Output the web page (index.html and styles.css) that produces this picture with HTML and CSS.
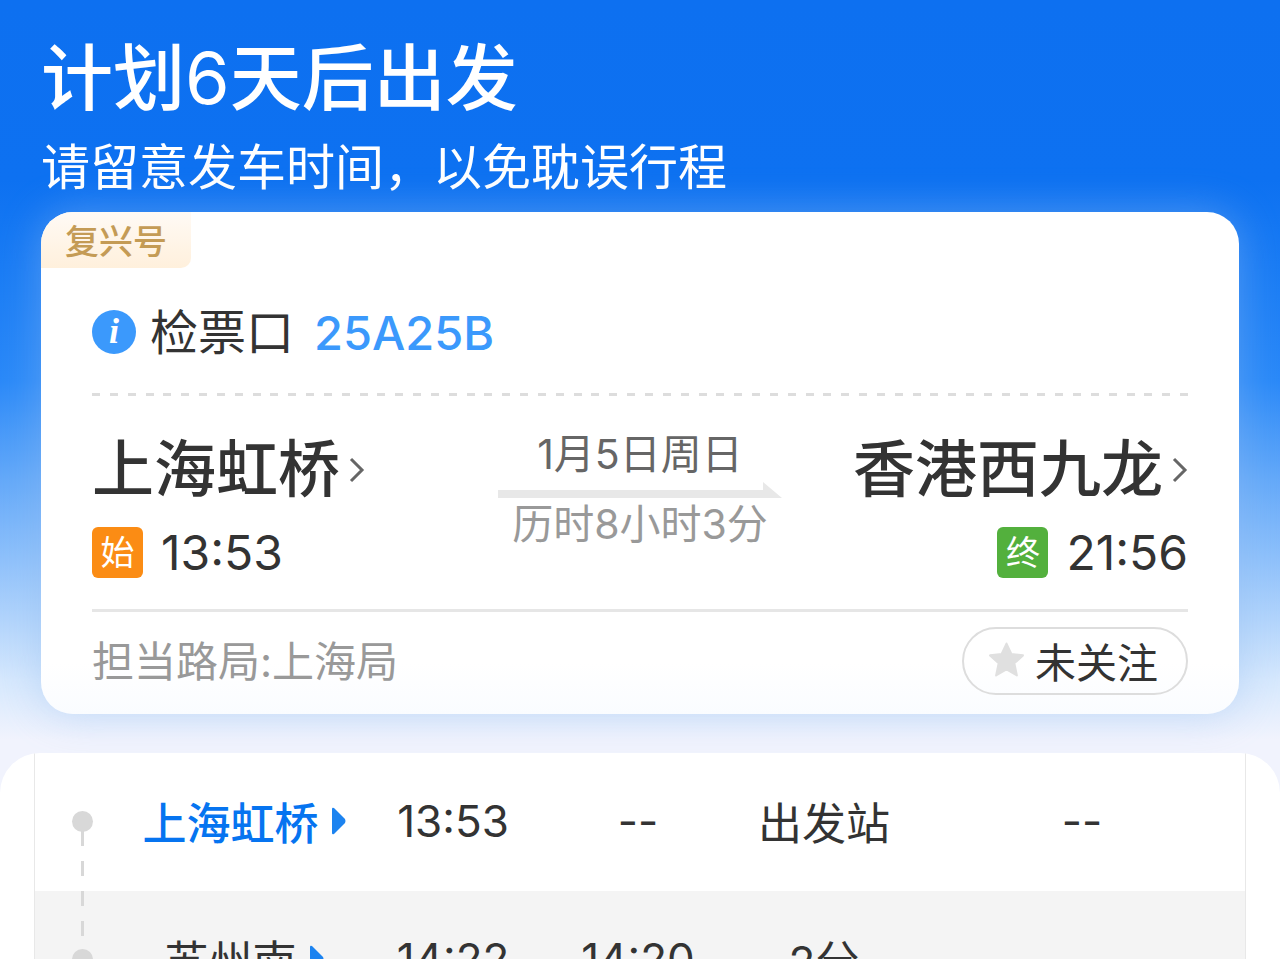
FILE: index.html
```
<!DOCTYPE html>
<html lang="zh-CN">
  <head>
    <meta charset="UTF-8" />
    <meta name="viewport" content="width=device-width, initial-scale=1.0" />
    <title>行程详情</title>
    <link rel="stylesheet" href="styles.css">
  </head>
  <body>
    <header class="header">
      <h1>计划<span class="days">6</span>天后出发</h1>
      <p>请留意发车时间，以免耽误行程</p>
    </header>

    <section class="card">
      <div class="train-tag">复兴号</div>
      <div class="gate">
        <span class="info-icon">i</span>
        <span class="gate-label">检票口</span>
        <span class="gate-value">25A25B</span>
      </div>

      <div class="trip">
        <div class="stop">
          <a href="#" class="station">上海虹桥
            <svg class="chevron" viewBox="0 0 16 28"><path d="M2 3 L13 14 L2 25" /></svg>
          </a>
          <div class="time"><span class="badge start">始</span>13:53</div>
        </div>
        <div class="duration">
          <div class="date">1月5日周日</div>
          <svg class="arrow" viewBox="0 0 284 16"><path d="M0 8 H265 V0 L284 16 H0 Z" /></svg>
          <div class="total">历时8小时3分</div>
        </div>
        <div class="stop stop-end">
          <a href="#" class="station">香港西九龙
            <svg class="chevron" viewBox="0 0 16 28"><path d="M2 3 L13 14 L2 25" /></svg>
          </a>
          <div class="time"><span class="badge end">终</span>21:56</div>
        </div>
      </div>

      <div class="card-footer">
        <span class="bureau">担当路局:上海局</span>
        <button type="button" class="follow">
          <svg class="star" viewBox="0 0 36 36"><path d="M18 2 L22.7 12.2 L34 13.5 L25.6 21.2 L28.1 33 L18 27.2 L7.9 33 L10.4 21.2 L2 13.5 L13.3 12.2 Z" /></svg>
          未关注
        </button>
      </div>
    </section>

    <main class="panel">
      <table class="stops">
        <colgroup>
          <col class="col-rail" />
          <col class="col-name" />
          <col class="col-arrive" />
          <col class="col-depart" />
          <col class="col-stay" />
          <col />
        </colgroup>
        <tbody>
          <tr>
            <td class="rail first"><span class="dot"></span></td>
            <td>
              <a href="#" class="stop-name current">上海虹桥
                <svg class="play" viewBox="0 0 15 28"><path d="M1 2 Q1 0 3 1 L14 12 Q15 14 14 16 L3 27 Q1 28 1 26 Z" /></svg>
              </a>
            </td>
            <td>13:53</td>
            <td>--</td>
            <td>出发站</td>
            <td>--</td>
          </tr>
          <tr>
            <td class="rail"><span class="dot"></span></td>
            <td>
              <a href="#" class="stop-name">苏州南
                <svg class="play" viewBox="0 0 15 28"><path d="M1 2 Q1 0 3 1 L14 12 Q15 14 14 16 L3 27 Q1 28 1 26 Z" /></svg>
              </a>
            </td>
            <td>14:22</td>
            <td>14:20</td>
            <td>2分</td>
            <td></td>
          </tr>
        </tbody>
      </table>
    </main>
  </body>
</html>
```
FILE: styles.css
```
* {
  box-sizing: border-box;
}
body {
  margin: 0;
  height: 100vh;
  overflow: hidden;
  display: flex;
  flex-direction: column;
  font-family: Inter, "Noto Sans CJK SC", sans-serif;
  color: #333;
  background: linear-gradient(
    #0d70f0 0,
    #0d71f1 180px,
    #2a89f8 380px,
    #64a9f9 480px,
    #8fc1fb 560px,
    #d6e8fd 680px,
    #f1f3fd 740px
  );
}
h1,
p {
  margin: 0;
}
a {
  color: inherit;
  text-decoration: none;
}
.header {
  padding: 42px 41px 20px;
  color: #fff;
}
.header h1 {
  font-size: 72px;
  line-height: 72px;
  font-weight: 500;
}
.header .days {
  font-weight: 400;
}
.header p {
  margin-top: 30px;
  font-size: 49px;
  line-height: 48px;
}

/* trip card */
.card {
  flex: none;
  margin: 0 41px;
  padding: 0 51px 19px;
  border-radius: 32px;
  background: linear-gradient(#fff 90%, #fafcff);
  box-shadow: 0 0 40px rgba(150, 190, 240, 0.45);
}
.train-tag {
  width: fit-content;
  margin-left: -51px;
  padding: 4px 24px 0;
  border-radius: 32px 0 10px 0;
  background: linear-gradient(#fffaf5, #fff0dc);
  color: #c49b55;
  font-size: 34px;
  line-height: 52px;
  font-weight: 500;
}
.gate {
  display: flex;
  align-items: center;
  margin-top: 33px;
  padding-bottom: 30px;
  font-size: 48px;
  line-height: 60px;
}
.info-icon {
  width: 44px;
  height: 44px;
  margin-right: 14px;
  border-radius: 50%;
  background: #3b99fc;
  color: #fff;
  font: italic bold 36px/42px "Liberation Serif", serif;
  text-align: center;
}
.gate-label,
.gate-value {
  padding-top: 2px;
}
.gate-value {
  margin-left: 20px;
  color: #3b99fc;
  font-size: 47px;
  font-weight: 500;
}
.trip {
  display: grid;
  grid-template-columns: 1fr auto 1fr;
  padding: 46px 0 31px;
  border-bottom: 3px solid #e6e6e6;
  background: repeating-linear-gradient(to right, #ddd 0 8px, transparent 8px calc((100% + 10px) / 62)) top / 100% 3px no-repeat;
}
.stop-end {
  display: flex;
  flex-direction: column;
  align-items: flex-end;
}
.station {
  display: flex;
  align-items: center;
  gap: 9px;
  font-size: 62px;
  line-height: 62px;
  font-weight: 500;
}
.chevron {
  width: 16px;
  height: 28px;
  fill: none;
  stroke: #666;
  stroke-width: 3;
}
.time {
  display: flex;
  align-items: center;
  gap: 18px;
  margin-top: 26px;
  font-size: 48px;
  line-height: 51px;
}
.badge {
  width: 51px;
  height: 51px;
  border-radius: 6px;
  color: #fff;
  font-size: 34px;
  text-align: center;
}
.start {
  background: #fb8c14;
}
.end {
  background: #53b03d;
}
.duration {
  font-size: 41px;
  line-height: 44px;
  text-align: center;
}
.date {
  margin-top: -7px;
  color: #666;
}
.arrow {
  display: block;
  width: 284px;
  height: 16px;
  margin: 6px 0 4px;
  fill: #e8e8e8;
}
.total {
  color: #999;
}
.card-footer {
  display: flex;
  justify-content: space-between;
  align-items: center;
  padding-top: 15px;
  color: #999;
  font-size: 42px;
}
.bureau {
  padding-bottom: 6px;
}
.follow {
  display: flex;
  align-items: center;
  gap: 10px;
  height: 68px;
  padding: 0 28px 2px 24px;
  border: 2px solid #ddd;
  border-radius: 34px;
  background: transparent;
  color: #333;
  font-family: inherit;
  font-size: 41px;
}
.star {
  width: 37px;
  height: 38px;
  fill: #e0e0e0;
  stroke: #e0e0e0;
  stroke-width: 2;
  stroke-linejoin: round;
}

/* timetable */
.panel {
  flex: 1;
  min-height: 0;
  margin-top: 39px;
  padding: 0 34px;
  overflow: hidden;
  border-radius: 40px 40px 0 0;
  background: #fff;
}
.stops {
  width: 100%;
  table-layout: fixed;
  border-spacing: 0;
  border: solid #e8e8e8;
  border-width: 0 1px;
  font-size: 44px;
}
.col-rail {
  width: 94px;
}
.col-name {
  width: 230px;
}
.col-arrive {
  width: 188px;
}
.col-depart {
  width: 182px;
}
.col-stay {
  width: 190px;
}
.stops td {
  height: 138px;
  padding: 0 0 2px;
  text-align: center;
}
.stops tr:nth-child(even) {
  background: #f4f4f4;
}
.rail {
  background: repeating-linear-gradient(#d8d8d8 0 15px, transparent 15px 30px) center / 3px 100% no-repeat;
}
.rail.first {
  background: repeating-linear-gradient(to top, transparent 0 15px, #d8d8d8 15px 30px) bottom / 3px 50% no-repeat;
}
.dot {
  display: block;
  width: 21px;
  height: 21px;
  margin: 0 auto;
  border-radius: 50%;
  background: #d8d8d8;
}
.stop-name {
  display: flex;
  align-items: center;
  justify-content: center;
  gap: 12px;
}
.current {
  color: #0674f0;
  font-weight: 500;
}
.play {
  width: 15px;
  height: 28px;
  fill: #1c83f0;
}
```
